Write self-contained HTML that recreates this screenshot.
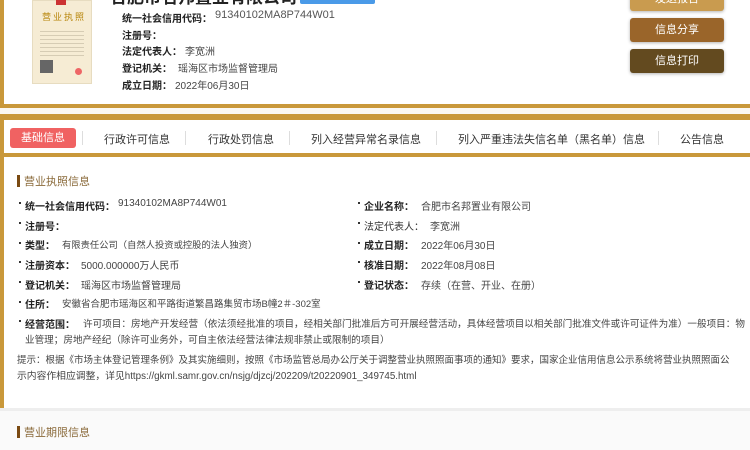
<!DOCTYPE html>
<html><head><meta charset="utf-8"><style>
*{margin:0;padding:0;box-sizing:border-box}
body{width:750px;height:450px;overflow:hidden;background:#fff;font-family:"Liberation Sans","Noto Sans CJK SC",sans-serif;color:#333;position:relative}
.a{position:absolute;white-space:nowrap}
.lbl{font-weight:bold;color:#222;font-size:10px}
.v{font-size:10px;color:#444}
.btn{position:absolute;left:630px;width:94px;height:24px;border-radius:3px;color:#fff;font-size:11px;text-align:center;line-height:24px;box-shadow:0 1px 3px rgba(0,0,0,.3)}
.tab{position:absolute;top:131px;font-size:11px;color:#333}
.sep{position:absolute;top:131px;width:1px;height:14px;background:#ddd}
.dot{position:absolute;width:2px;height:2px;background:#333}
</style></head><body>
<!-- top card -->
<div class="a" style="left:0;top:0;width:750px;height:108px;border-left:4px solid #c9983a;border-bottom:4px solid #c9983a;background:#fff"></div>
<div class="a" style="left:32px;top:0;width:60px;height:84px;background:#f6ecd4;border:1px solid #e7dcc0"></div>
<div class="a" style="left:56px;top:0;width:10px;height:5px;background:#c33"></div>
<div class="a" style="left:42px;top:10px;font-size:9px;color:#b8860b;letter-spacing:2px">营业执照</div>
<div class="a" style="left:40px;top:28px;width:44px;height:30px;background:repeating-linear-gradient(#f6ecd4 0 3px,#d6ccb4 3px 4px)"></div>
<div class="a" style="left:40px;top:60px;width:13px;height:13px;background:#666"></div>
<div class="a" style="left:75px;top:68px;width:7px;height:7px;border-radius:50%;background:#e66"></div>
<div class="a" style="left:110px;top:-17px;font-size:17px;font-weight:bold;color:#222">合肥市名邦置业有限公司</div>
<div class="a" style="left:300px;top:0;width:75px;height:4px;background:#4a9ae8;border-radius:0 0 2px 2px"></div>
<div class="a lbl" style="left:122px;top:10px">统一社会信用代码：</div><div class="a v" style="left:215px;top:9px;font-size:11px;color:#555">91340102MA8P744W01</div>
<div class="a lbl" style="left:122px;top:27px">注册号：</div>
<div class="a lbl" style="left:122px;top:43px">法定代表人：</div><div class="a v" style="left:185px;top:43px">李宽洲</div>
<div class="a lbl" style="left:122px;top:60px">登记机关：</div><div class="a v" style="left:178px;top:60px">瑶海区市场监督管理局</div>
<div class="a lbl" style="left:122px;top:77px">成立日期：</div><div class="a v" style="left:175px;top:77px">2022年06月30日</div>
<div class="btn" style="top:-13px;background:#c99b4f">发送报告</div>
<div class="btn" style="top:18px;background:#9a652a">信息分享</div>
<div class="btn" style="top:49px;background:#634a1f">信息打印</div>
<!-- gap -->
<div class="a" style="left:0;top:108px;width:750px;height:6px;background:#fbf8f2"></div>
<!-- tabs -->
<div class="a" style="left:0;top:114px;width:750px;height:43px;border-top:6px solid #c9983a;border-bottom:4px solid #c9983a;border-left:4px solid #c9983a;background:#fff"></div>
<div class="a" style="left:10px;top:128px;width:66px;height:20px;background:#f06262;border-radius:3px;color:#fff;font-size:11px;text-align:center;line-height:20px">基础信息</div>
<div class="sep" style="left:82px"></div>
<div class="tab" style="left:104px">行政许可信息</div>
<div class="sep" style="left:185px"></div>
<div class="tab" style="left:208px">行政处罚信息</div>
<div class="sep" style="left:289px"></div>
<div class="tab" style="left:311px">列入经营异常名录信息</div>
<div class="sep" style="left:436px"></div>
<div class="tab" style="left:458px">列入严重违法失信名单（黑名单）信息</div>
<div class="sep" style="left:658px"></div>
<div class="tab" style="left:680px">公告信息</div>
<!-- content -->
<div class="a" style="left:0;top:157px;width:4px;height:251px;background:#c9983a"></div>
<div class="a" style="left:17px;top:175px;width:3px;height:12px;background:#7a4a12"></div>
<div class="a" style="left:24px;top:173px;font-size:11px;color:#8a6a3a">营业执照信息</div>

<div class="dot" style="left:19px;top:202px"></div><div class="a lbl" style="left:25px;top:198px">统一社会信用代码：</div><div class="a v" style="left:118px;top:198px">91340102MA8P744W01</div>
<div class="dot" style="left:19px;top:222px"></div><div class="a lbl" style="left:25px;top:218px">注册号：</div>
<div class="dot" style="left:19px;top:242px"></div><div class="a lbl" style="left:25px;top:237px">类型：</div><div class="a v" style="left:62px;top:237px;font-size:9.3px">有限责任公司（自然人投资或控股的法人独资）</div>
<div class="dot" style="left:19px;top:261px"></div><div class="a lbl" style="left:25px;top:257px">注册资本：</div><div class="a v" style="left:81px;top:257px">5000.000000万人民币</div>
<div class="dot" style="left:19px;top:281px"></div><div class="a lbl" style="left:25px;top:277px">登记机关：</div><div class="a v" style="left:81px;top:277px">瑶海区市场监督管理局</div>
<div class="dot" style="left:19px;top:301px"></div><div class="a lbl" style="left:25px;top:296px">住所：</div><div class="a v" style="left:62px;top:296px;font-size:9.5px">安徽省合肥市瑶海区和平路街道繁昌路集贸市场B幢2＃-302室</div>

<div class="dot" style="left:358px;top:202px"></div><div class="a lbl" style="left:364px;top:198px">企业名称：</div><div class="a v" style="left:421px;top:198px">合肥市名邦置业有限公司</div>
<div class="dot" style="left:358px;top:222px"></div><div class="a v" style="left:364px;top:218px;color:#333">法定代表人：</div><div class="a v" style="left:430px;top:218px">李宽洲</div>
<div class="dot" style="left:358px;top:242px"></div><div class="a lbl" style="left:364px;top:237px">成立日期：</div><div class="a v" style="left:421px;top:237px">2022年06月30日</div>
<div class="dot" style="left:358px;top:261px"></div><div class="a lbl" style="left:364px;top:257px">核准日期：</div><div class="a v" style="left:421px;top:257px">2022年08月08日</div>
<div class="dot" style="left:358px;top:281px"></div><div class="a lbl" style="left:364px;top:277px">登记状态：</div><div class="a v" style="left:421px;top:277px">存续（在营、开业、在册）</div>

<div class="dot" style="left:19px;top:320px"></div><div class="a lbl" style="left:25px;top:316px">经营范围：</div><div class="a v" style="left:83px;top:316px;font-size:9.6px">许可项目：房地产开发经营（依法须经批准的项目，经相关部门批准后方可开展经营活动，具体经营项目以相关部门批准文件或许可证件为准）一般项目：物</div>
<div class="a v" style="left:25px;top:332px;font-size:9.6px">业管理；房地产经纪（除许可业务外，可自主依法经营法律法规非禁止或限制的项目）</div>
<div class="a v" style="left:17px;top:352px;font-size:9.5px">提示：根据《市场主体登记管理条例》及其实施细则，按照《市场监管总局办公厅关于调整营业执照照面事项的通知》要求，国家企业信用信息公示系统将营业执照照面公</div>
<div class="a v" style="left:17px;top:368px;font-size:9.8px">示内容作相应调整，详见https://gkml.samr.gov.cn/nsjg/djzcj/202209/t20220901_349745.html</div>
<!-- second section -->
<div class="a" style="left:0;top:408px;width:750px;height:3px;background:#eee"></div>
<div class="a" style="left:0;top:411px;width:750px;height:39px;background:#fafafa"></div>
<div class="a" style="left:17px;top:426px;width:3px;height:12px;background:#7a4a12"></div>
<div class="a" style="left:24px;top:424px;font-size:11px;color:#8a6a3a">营业期限信息</div>
</body></html>
